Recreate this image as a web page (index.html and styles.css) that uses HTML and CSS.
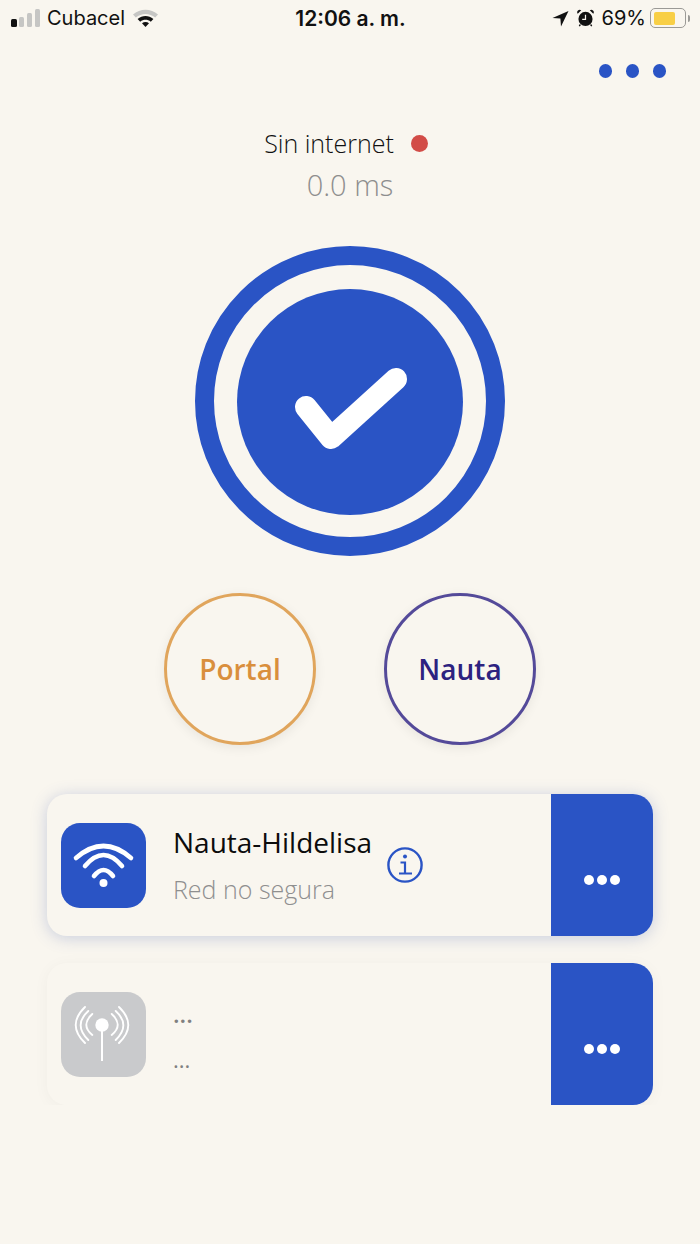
FILE: index.html
```html
<!DOCTYPE html>
<html lang="es">

<head>
    <meta charset="UTF-8">
    <meta name="viewport" content="width=device-width, initial-scale=1.0">
    <title>Nauta</title>
    <link rel="stylesheet" href="styles.css">
</head>

<body>
    <div class="statusbar">
        <div class="status-left">
            <svg class="signal" width="30" height="18" viewBox="0 0 30 18">
                <rect x="0" y="10" width="6" height="8" rx="1.5" fill="#111"/>
                <rect x="8" y="8" width="5" height="10" rx="1.5" fill="#c6c6c4"/>
                <rect x="16" y="4" width="5" height="14" rx="1.5" fill="#c6c6c4"/>
                <rect x="24" y="0" width="5" height="18" rx="1.5" fill="#c6c6c4"/>
            </svg>
            <span class="carrier">Cubacel</span>
            <svg class="wifi-small" width="27" height="20" viewBox="0 0 27 20">
                <path d="M1 6.5 C8 0.2 19 0.2 26 6.5 L23.2 9.6 C17.5 4.8 9.5 4.8 3.8 9.6 Z" fill="#c6c6c4"/>
                <path d="M5.6 11 C10.3 7.1 16.7 7.1 21.4 11 L18.8 13.7 C15.6 11.2 11.4 11.2 8.2 13.7 Z" fill="#111"/>
                <path d="M10 15.2 C12 13.7 15 13.7 17 15.2 L13.5 19 Z" fill="#111"/>
            </svg>
        </div>
        <div class="clock">12:06 a. m.</div>
        <div class="status-right">
            <svg width="17" height="17" viewBox="0 0 17 17">
                <path d="M16.5 1 L0.5 8 L8.4 8.6 L9 16.5 Z" fill="#111"/>
            </svg>
            <svg class="alarm" width="17" height="18" viewBox="0 0 18 19">
                <circle cx="9" cy="10.5" r="7.5" fill="#111"/>
                <path d="M9 6 V11 H5.5" fill="none" stroke="#f9f6ef" stroke-width="1.3"/>
                <path d="M0.8 5 L4.5 1.4 A2.6 2.6 0 0 0 0.8 5 Z M17.2 5 L13.5 1.4 A2.6 2.6 0 0 1 17.2 5 Z" fill="#111"/>
                <path d="M3.6 16.4 L2.4 18 M14.4 16.4 L15.6 18" stroke="#111" stroke-width="1.4"/>
            </svg>
            <span class="percent">69%</span>
            <div class="battery">
                <div class="battery-fill"></div>
            </div>
            <div class="battery-tip"></div>
        </div>
    </div>

    <div class="menu-row">
        <span class="menu-dot"></span>
        <span class="menu-dot"></span>
        <span class="menu-dot"></span>
    </div>

    <div class="connection">
        <div class="connection-state">
            <span>Sin internet</span>
            <span class="red-dot"></span>
        </div>
        <div class="ping">0.0 ms</div>
    </div>

    <div class="ring">
        <div class="ring-inner">
            <svg width="120" height="100" viewBox="0 0 120 100">
                <path d="M16 55 L41 86 L106 27" fill="none" stroke="#fff" stroke-width="22" stroke-linecap="round" stroke-linejoin="round"/>
            </svg>
        </div>
    </div>

    <div class="shortcuts">
        <div class="shortcut portal">Portal</div>
        <div class="shortcut nauta">Nauta</div>
    </div>

    <div class="card card-active">
        <div class="card-main">
            <div class="card-icon icon-blue">
                <svg width="85" height="85" viewBox="0 0 85 85">
                    <g fill="none" stroke="#fff" stroke-width="4.6" stroke-linecap="round">
                        <path d="M15 35 Q42.5 11 70 35"/>
                        <path d="M24 43 Q42.5 21 61 43"/>
                        <path d="M33 53 Q42.5 41 52 53"/>
                    </g>
                    <circle cx="42.5" cy="60" r="4" fill="#fff"/>
                </svg>
            </div>
            <div class="card-text">
                <div class="card-title">Nauta-Hildelisa</div>
                <div class="card-sub">Red no segura</div>
            </div>
            <svg class="info" width="36" height="36" viewBox="0 0 36 36">
                <circle cx="18" cy="18" r="16.6" fill="none" stroke="#2a54c5" stroke-width="2.4"/>
                <circle cx="18" cy="9.5" r="2" fill="#2a54c5"/>
                <path d="M13.5 15.5 H18 V26 M12 26.5 H25" fill="none" stroke="#2a54c5" stroke-width="2.2"/>
            </svg>
        </div>
        <div class="card-more">
            <span></span><span></span><span></span>
        </div>
    </div>

    <div class="card card-idle">
        <div class="card-main">
            <div class="card-icon icon-gray">
                <svg width="85" height="85" viewBox="0 0 85 85">
                    <g fill="none" stroke="#fff" stroke-width="1.9" stroke-linecap="round">
                        <path d="M24 15 Q5.4 33 24 51"/>
                        <path d="M27.3 19 Q12 33 27.3 48"/>
                        <path d="M31.3 22 Q19.3 33 31.3 43"/>
                        <path d="M58 15 Q76.6 33 58 51"/>
                        <path d="M54.7 19 Q70 33 54.7 48"/>
                        <path d="M50.7 22 Q62.7 33 50.7 43"/>
                    </g>
                    <circle cx="41" cy="33" r="6.7" fill="#fff"/>
                    <rect x="40" y="36" width="2" height="33" fill="#fff"/>
                </svg>
            </div>
            <div class="card-text">
                <div class="card-title placeholder-title">...</div>
                <div class="card-sub placeholder-sub">...</div>
            </div>
        </div>
        <div class="card-more">
            <span></span><span></span><span></span>
        </div>
    </div>
</body>

</html>
```

FILE: styles.css
```css
body {
    font-family: "Open Sans", sans-serif;
    margin: 0;
    padding: 0;
    background-color: #f9f6ef;
    color: #111;
}

.statusbar {
    height: 36px;
    display: grid;
    grid-template-columns: 1fr auto 1fr;
    align-items: center;
    padding: 0 10px 0 11px;
    font-family: Inter, "Liberation Sans", sans-serif;
    font-size: 20px;
}

.status-left {
    display: flex;
    align-items: center;
    gap: 6px;
}

.wifi-small {
    margin-left: 1px;
}

.clock {
    font-size: 21px;
    font-weight: 600;
}

.status-right {
    display: flex;
    align-items: center;
    justify-content: flex-end;
    gap: 8px;
}

.battery {
    width: 36px;
    height: 20px;
    margin-left: -4px;
    padding: 2.5px;
    box-sizing: border-box;
    border: 1.5px solid #9b9a96;
    border-radius: 5px;
}

.battery-fill {
    width: 21px;
    height: 100%;
    background-color: #f8cf46;
    border-radius: 2px;
}

.battery-tip {
    width: 2px;
    height: 7px;
    margin-left: -6px;
    background-color: #9b9a96;
    border-radius: 0 2px 2px 0;
}

.menu-row {
    display: flex;
    justify-content: flex-end;
    gap: 13.5px;
    padding: 28px 34px 0 0;
}

.menu-dot {
    width: 13.5px;
    height: 14px;
    background-color: #2a54c5;
    border-radius: 50%;
}

.connection {
    margin-top: 47px;
    text-align: center;
}

.connection-state {
    display: flex;
    justify-content: center;
    align-items: center;
    gap: 17px;
    height: 36px;
    font-size: 25px;
    font-weight: 300;
    padding-right: 8px;
}

.red-dot {
    width: 17px;
    height: 17px;
    background-color: #d24c47;
    border-radius: 50%;
}

.ping {
    margin-top: 6px;
    font-size: 29px;
    font-weight: 300;
    line-height: 36px;
    color: #8e8e8e;
}

.ring {
    width: 310px;
    height: 310px;
    box-sizing: border-box;
    margin: 43px auto 0;
    padding-top: 2px;
    border: 19px solid #2a54c5;
    border-radius: 50%;
    display: flex;
    align-items: center;
    justify-content: center;
}

.ring-inner {
    width: 226px;
    height: 226px;
    background-color: #2a54c5;
    border-radius: 50%;
    display: flex;
    align-items: center;
    justify-content: center;
}

.shortcuts {
    display: flex;
    justify-content: center;
    gap: 68px;
    margin-top: 37px;
}

.shortcut {
    width: 152px;
    height: 152px;
    box-sizing: border-box;
    border: 3px solid;
    border-radius: 50%;
    display: flex;
    align-items: center;
    justify-content: center;
    font-size: 28px;
    font-weight: 600;
    box-shadow: 0 3px 12px rgba(0, 0, 0, 0.07);
}

.portal {
    border-color: #e0a55c;
    color: #d98f3d;
}

.nauta {
    border-color: #544a99;
    color: #2d2280;
}

.card {
    display: flex;
    width: 606px;
    height: 142px;
    margin: 0 auto;
    border-radius: 20px;
    overflow: hidden;
}

.card-active {
    margin-top: 49px;
    box-shadow: 0 2px 16px rgba(60, 90, 170, 0.26);
}

.card-idle {
    margin-top: 27px;
    box-shadow: 0 2px 16px rgba(0, 0, 0, 0.04);
}

.card-main {
    flex: 1;
    display: flex;
    align-items: center;
    padding-left: 14px;
}

.card-icon {
    width: 85px;
    height: 85px;
    border-radius: 19px;
    display: flex;
    align-items: center;
    justify-content: center;
}

.icon-blue {
    background-color: #2a54c5;
}

.icon-gray {
    background-color: #c9cacc;
}

.card-text {
    margin-left: 27px;
    padding-bottom: 2px;
}

.card-title {
    font-size: 28px;
    line-height: 38px;
    color: #0c0c0c;
}

.card-sub {
    margin-top: 11px;
    font-size: 25px;
    font-weight: 300;
    line-height: 34px;
    color: #8f8f8f;
}

.placeholder-title {
    font-size: 24px;
    font-weight: 600;
    color: #808080;
    padding-top: 4px;
}

.placeholder-sub {
    margin-top: 9px;
    font-size: 22px;
    font-weight: 400;
    color: #808080;
}

.info {
    margin-left: 15px;
}

.card-more {
    width: 102px;
    background-color: #2a54c5;
    display: flex;
    justify-content: center;
    align-items: center;
    gap: 3px;
    padding-top: 30px;
    box-sizing: border-box;
}

.card-more span {
    width: 10px;
    height: 10px;
    background-color: #fff;
    border-radius: 50%;
}
```
